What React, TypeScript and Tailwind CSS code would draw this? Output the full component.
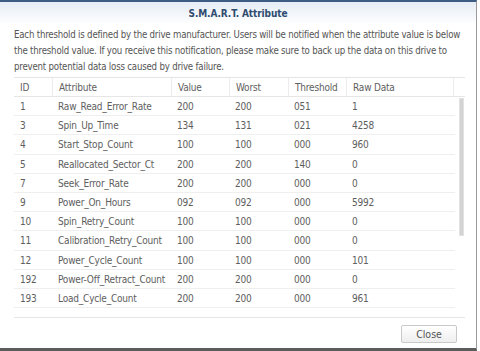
const rows = [
  ["1", "Raw_Read_Error_Rate", "200", "200", "051", "1"],
  ["3", "Spin_Up_Time", "134", "131", "021", "4258"],
  ["4", "Start_Stop_Count", "100", "100", "000", "960"],
  ["5", "Reallocated_Sector_Ct", "200", "200", "140", "0"],
  ["7", "Seek_Error_Rate", "200", "200", "000", "0"],
  ["9", "Power_On_Hours", "092", "092", "000", "5992"],
  ["10", "Spin_Retry_Count", "100", "100", "000", "0"],
  ["11", "Calibration_Retry_Count", "100", "100", "000", "0"],
  ["12", "Power_Cycle_Count", "100", "100", "000", "101"],
  ["192", "Power-Off_Retract_Count", "200", "200", "000", "0"],
  ["193", "Load_Cycle_Count", "200", "200", "000", "961"],
]

const headers = ["ID", "Attribute", "Value", "Worst", "Threshold", "Raw Data"]
const colWidths = ["w-[38px]", "w-[119px]", "w-[58px]", "w-[59px]", "w-[58px]", "w-[107px]"]

export default function App() {
  return (
    <div className="w-[480px] h-[351px] bg-white flex font-['DejaVu_Sans_Condensed','DejaVu_Sans',sans-serif] text-[#5e5e5e] overflow-hidden">
      <div className="w-[477px] h-[351px] flex flex-col border-t-2 border-t-[#3d5d84] border-r border-r-[#9a9a9a] border-b-[3px] border-b-[#5c5c5c]">
        {/* Title */}
        <div className="h-[23px] shrink-0 bg-gradient-to-b from-[#e6edf5] to-white flex items-center justify-center">
          <span className="text-[10px] font-bold text-[#2e4b70] tracking-[-0.1px]">S.M.A.R.T. Attribute</span>
        </div>

        {/* Description */}
        <p className="px-[14px] pt-[2px] text-[9.6px] leading-[16px] text-[#555] tracking-[-0.2px] whitespace-nowrap">
          Each threshold is defined by the drive manufacturer. Users will be notified when the attribute value is below
          <br />
          the threshold value. If you receive this notification, please make sure to back up the data on this drive to
          <br />
          prevent potential data loss caused by drive failure.
        </p>

        {/* Table */}
        <div className="mt-[2px] ml-[14px] w-[451px] h-[241px] border-t border-b border-[#e4e4e4] relative">
          <div className="flex h-[19px] border-b border-[#e6e6e6]">
            {headers.map((h, i) => (
              <div
                key={h}
                className={`${colWidths[i]} ${i > 0 ? "border-l border-[#ececec]" : ""} px-[6px] text-[10px] leading-[19px] tracking-[-0.2px]`}
              >
                {h}
              </div>
            ))}
            <div className="flex-1 border-l border-[#ececec]" />
          </div>
          <div>
            {rows.map((r) => (
              <div key={r[0]} className="flex h-[19.2px] border-b border-[#efefef] w-[441px]">
                {r.map((c, i) => (
                  <div key={i} className={`${colWidths[i]} px-[6px] text-[10px] leading-[19px] tracking-[-0.2px] whitespace-nowrap`}>
                    {c}
                  </div>
                ))}
              </div>
            ))}
          </div>
          {/* scrollbar */}
          <div className="absolute left-[445px] top-[20px] w-[5px] h-[138px] bg-[#d3d3d3] border border-[#e2e2e2]" />
        </div>

        {/* Footer */}
        <div className="flex-1 flex justify-end items-start pr-[19px] pt-[7px]">
          <button className="w-[56px] h-[18px] border border-[#c9c9c9] rounded-[2px] bg-gradient-to-b from-white to-[#eeeeee] text-[10.5px] text-[#555] leading-[16px]">
            Close
          </button>
        </div>
      </div>
    </div>
  )
}
